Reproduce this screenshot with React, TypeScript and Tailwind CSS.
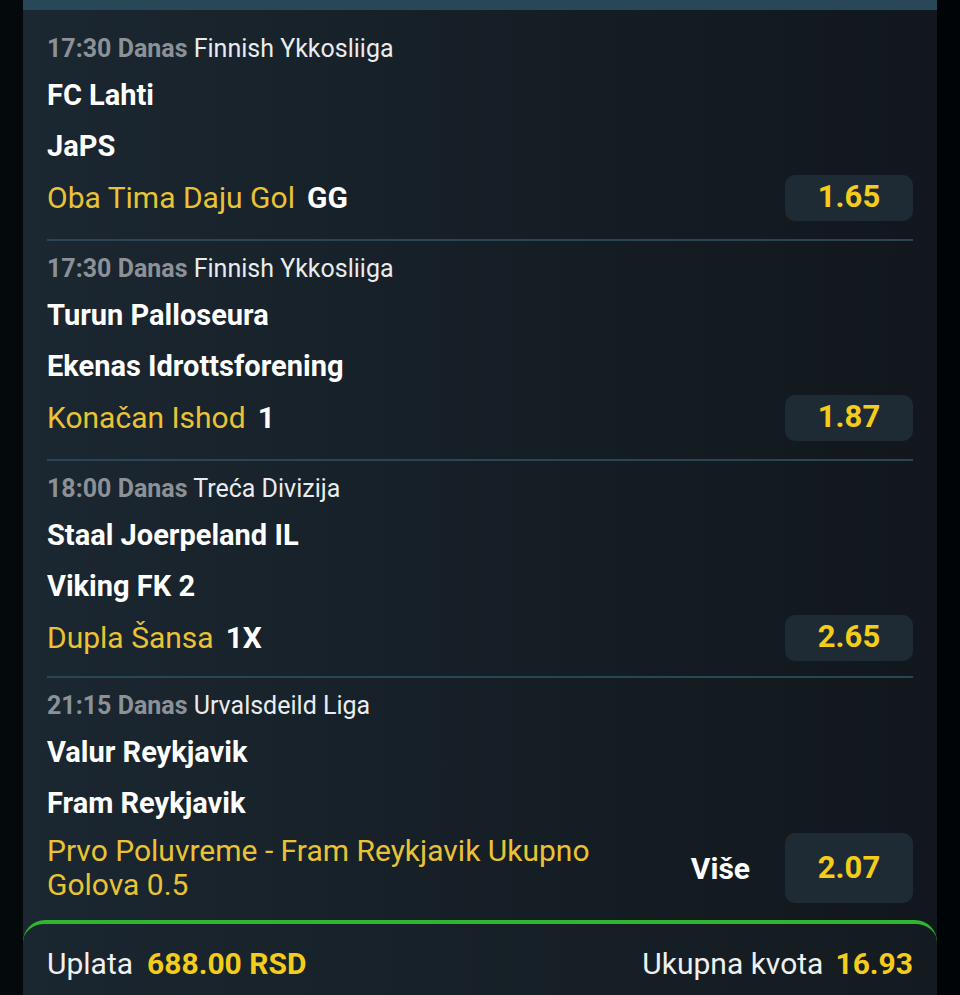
import React from "react";

type Bet = {
  time: string;
  league: string;
  home: string;
  away: string;
  market: string;
  pick?: string;
  side?: string;
  odd: string;
};

const bets: Bet[] = [
  { time: "17:30 Danas", league: "Finnish Ykkosliiga", home: "FC Lahti", away: "JaPS", market: "Oba Tima Daju Gol", pick: "GG", odd: "1.65" },
  { time: "17:30 Danas", league: "Finnish Ykkosliiga", home: "Turun Palloseura", away: "Ekenas Idrottsforening", market: "Konačan Ishod", pick: "1", odd: "1.87" },
  { time: "18:00 Danas", league: "Treća Divizija", home: "Staal Joerpeland IL", away: "Viking FK 2", market: "Dupla Šansa", pick: "1X", odd: "2.65" },
  { time: "21:15 Danas", league: "Urvalsdeild Liga", home: "Valur Reykjavik", away: "Fram Reykjavik", market: "Prvo Poluvreme - Fram Reykjavik Ukupno Golova 0.5", side: "Više", odd: "2.07" },
];

function OddBox({ odd, tall }: { odd: string; tall?: boolean }) {
  return (
    <div
      className={
        "w-[128px] shrink-0 rounded-[10px] bg-[#1e2b35] flex items-center justify-center text-[31px] font-bold text-[#f4cd1c] " +
        (tall ? "h-[70px]" : "h-[46px]")
      }
    >
      {odd}
    </div>
  );
}

function Card({ bet, index, last }: { bet: Bet; index: number; last?: boolean }) {
  const pt = index === 0 ? "pt-[23px] " : "pt-[12px] ";
  const pb = index === 2 ? "pb-[13px] " : "pb-[16px] ";
  return (
    <div className={pt + pb + (last ? "" : "border-b-2 border-[#2a4654]")}>
      <div className="h-[32px] leading-[32px] text-[25px] whitespace-nowrap">
        <span className="font-bold text-[#8b9196]">{bet.time}</span>{" "}
        <span className="text-[#e9ecee]">{bet.league}</span>
      </div>
      <div className="mt-[5px] leading-[51px] text-[29px] font-bold text-white">{bet.home}</div>
      <div className="leading-[51px] text-[29px] font-bold text-white">{bet.away}</div>
      {bet.side ? (
        <div className="mt-[3px] h-[72px] flex items-center">
          <div className="flex-1 pr-[40px] text-[30px] leading-[34px] text-[#e9c335]">{bet.market}</div>
          <div className="mr-[35px] text-[30px] font-bold text-white">{bet.side}</div>
          <OddBox odd={bet.odd} tall />
        </div>
      ) : (
        <div className="h-[51px] flex items-center justify-between">
          <div className="text-[30px] leading-[51px] whitespace-nowrap">
            <span className="text-[#e9c335]">{bet.market}</span>
            <span className="ml-[12px] font-bold text-white">{bet.pick}</span>
          </div>
          <OddBox odd={bet.odd} />
        </div>
      )}
    </div>
  );
}

export default function App() {
  return (
    <div
      className="w-[960px] h-[995px] overflow-hidden bg-linear-to-r from-[#04090c] to-[#010406] px-[23px]"
      style={{ fontFamily: "Roboto, 'Noto Sans', 'Liberation Sans', sans-serif" }}
    >
      <div className="h-full flex flex-col bg-linear-to-r from-[#1b2731] to-[#11171c]">
        <div className="h-[10px] shrink-0 bg-[#284858]" />
        <div className="px-[24px]">
          {bets.map((b, i) => (
            <Card key={i} bet={b} index={i} last={i === bets.length - 1} />
          ))}
        </div>
        <div className="flex-1 rounded-t-[22px] border-t-4 border-[#2fb52f] bg-linear-to-r from-[#1a2630] to-[#141b20] px-[24px] pt-[24px]">
          <div className="flex justify-between items-center leading-[32px] text-[30px] whitespace-nowrap">
            <div>
              <span className="text-[#eef0f1]">Uplata</span>
              <span className="ml-[14px] font-bold text-[#f4cd1c]">688.00 RSD</span>
            </div>
            <div>
              <span className="text-[#eef0f1]">Ukupna kvota</span>
              <span className="ml-[12px] font-bold text-[#f4cd1c]">16.93</span>
            </div>
          </div>
        </div>
      </div>
    </div>
  );
}
